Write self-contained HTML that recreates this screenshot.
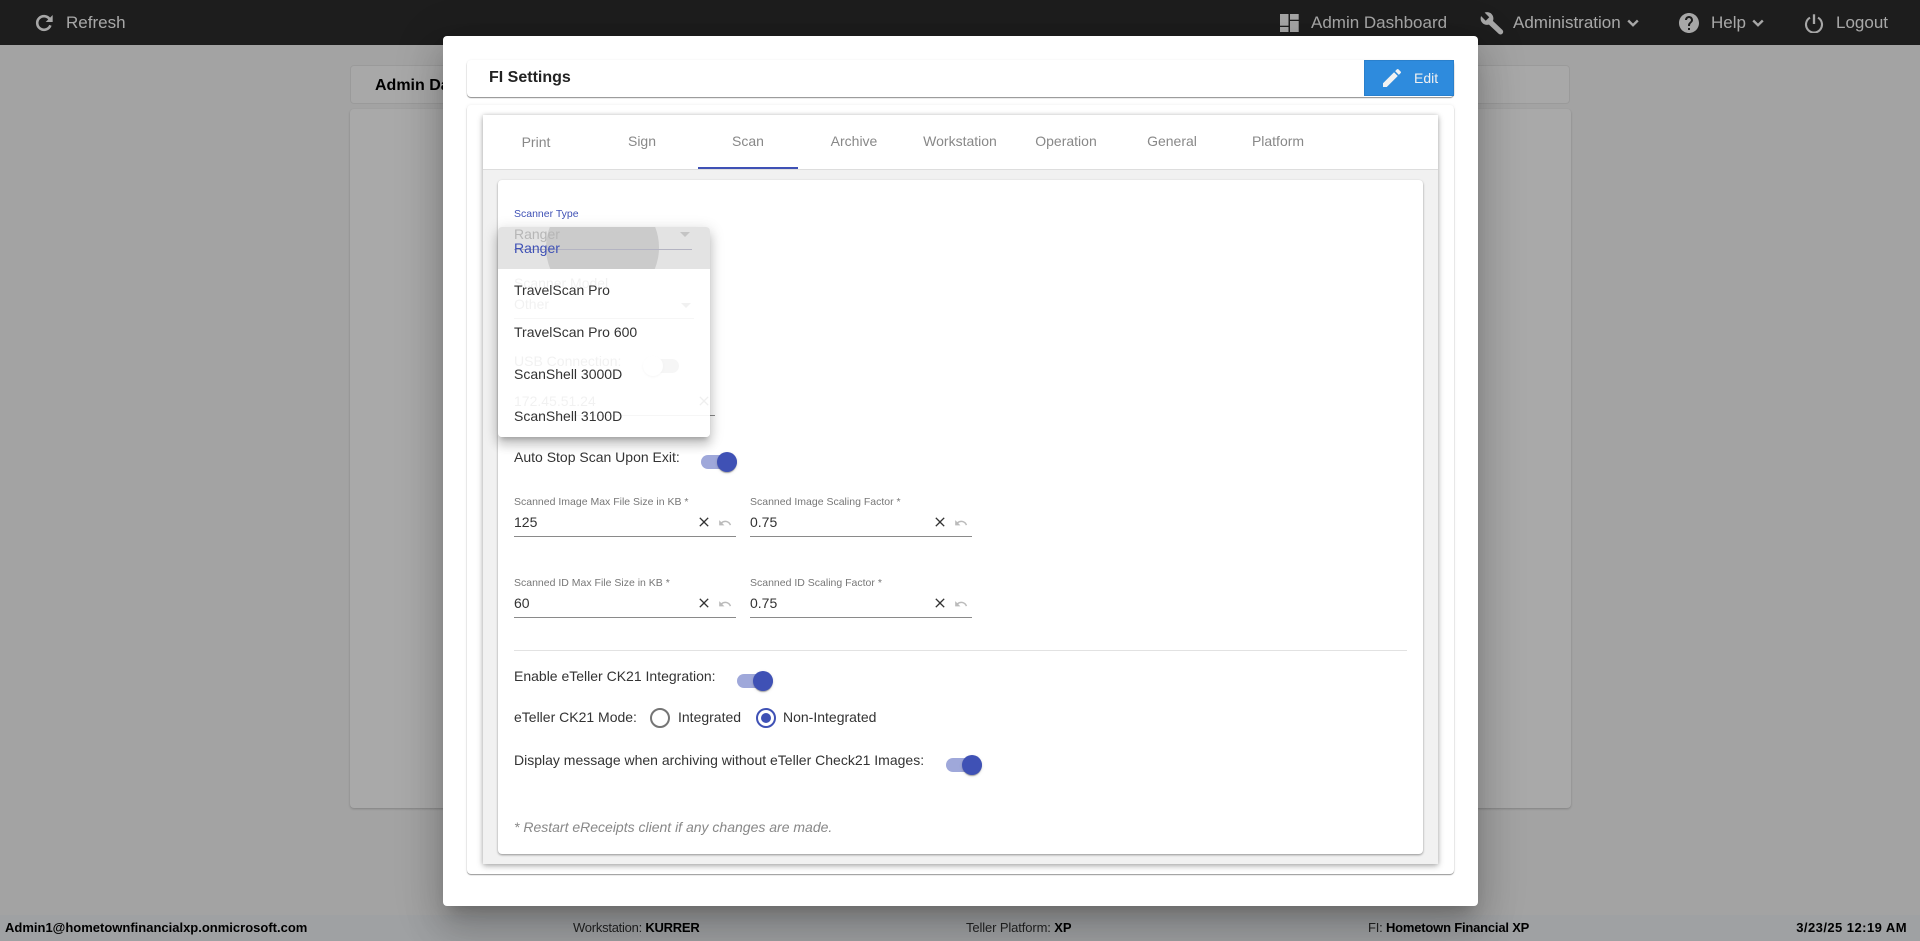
<!DOCTYPE html>
<html><head><meta charset="utf-8"><title>FI Settings</title>
<style>
html,body{margin:0;padding:0;width:1920px;height:941px;overflow:hidden;background:#f0f0f0;font-family:"Liberation Sans",Arial,sans-serif;font-size:14px;color:#333}
div,span,svg{position:absolute;box-sizing:border-box}
.t{white-space:nowrap;line-height:16px;height:16px}
.nav{font-size:17px;line-height:20px;height:20px;white-space:nowrap;color:#f6f6f6}
.ic{fill:#f6f6f6}
.tab{top:133px;width:106px;text-align:center;color:#888;font-size:14px;line-height:16px;height:16px}
.lab{font-size:10.5px;color:#777;line-height:12px;height:12px;white-space:nowrap}
.ul{height:1px;background:#8a8a8a}
.val{font-size:14px;color:#333;line-height:16px;height:16px}
.x{fill:#333}.u{fill:#bbb}
.tr{width:36px;height:14px;border-radius:7px;background:#9fa8da}
.th{width:20px;height:20px;border-radius:50%;background:#3f51b5;box-shadow:0 2px 1px -1px rgba(0,0,0,.2),0 1px 1px 0 rgba(0,0,0,.14),0 1px 3px 0 rgba(0,0,0,.12)}
.foot{top:921px;font-size:13px;line-height:14px;height:14px;white-space:nowrap;color:#333}
.foot b{color:#000}
.opt{left:0;width:212px;height:42px;padding-left:16px;line-height:42px;font-size:14px;color:#333}
</style></head><body>
<!-- page -->
<div style="left:0;top:0;width:1920px;height:45px;background:#2b2b2b"></div>
<svg style="left:33px;top:12px" width="24" height="24" viewBox="0 0 24 24"><path d="M16.6 7.1A6.8 6.8 0 1 0 17.4 13.3" fill="none" stroke="#f6f6f6" stroke-width="2.6"/><path d="M19.7 3V10H12.7z" fill="#f6f6f6"/></svg>
<div class="nav" style="left:66px;top:13px">Refresh</div>
<svg style="left:1280px;top:14px" width="19" height="18" viewBox="0 0 19 18" fill="#f6f6f6"><rect x="0" y="0" width="8.5" height="11.7"/><rect x="0" y="13" width="8.5" height="5"/><rect x="10" y="0" width="8.7" height="5.7"/><rect x="10" y="7" width="8.7" height="11"/></svg>
<div class="nav" style="left:1311px;top:13px">Admin Dashboard</div>
<svg style="left:1480px;top:11px" width="24" height="24" viewBox="0 0 24 24"><path d="M8 9L20.5 20.8" stroke="#f6f6f6" stroke-width="5.4" stroke-linecap="round" fill="none"/><circle cx="7" cy="7.5" r="6.4" fill="#f6f6f6"/><path d="M7.5 8L0 .5" stroke="#2b2b2b" stroke-width="5" fill="none"/></svg>
<div class="nav" style="left:1513px;top:13px">Administration</div>
<svg style="left:1627px;top:19px" width="12" height="8" viewBox="0 0 12 8"><path d="M1.2 1.5L6 6.2 10.8 1.5" fill="none" stroke="#f6f6f6" stroke-width="2.4"/></svg>
<svg class="ic" style="left:1677px;top:11px" width="24" height="24" viewBox="0 0 24 24"><path d="M12 2C6.48 2 2 6.48 2 12s4.48 10 10 10 10-4.48 10-10S17.52 2 12 2zm1 17h-2v-2h2v2zm2.07-7.75l-.9.92C13.45 12.9 13 13.5 13 15h-2v-.5c0-1.1.45-2.1 1.17-2.83l1.24-1.26c.37-.36.59-.86.59-1.41 0-1.1-.9-2-2-2s-2 .9-2 2H8c0-2.21 1.79-4 4-4s4 1.79 4 4c0 .88-.36 1.68-.93 2.25z"/></svg>
<div class="nav" style="left:1711px;top:13px">Help</div>
<svg style="left:1752px;top:19px" width="12" height="8" viewBox="0 0 12 8"><path d="M1.2 1.5L6 6.2 10.8 1.5" fill="none" stroke="#f6f6f6" stroke-width="2.4"/></svg>
<svg style="left:1804px;top:13px" width="20" height="20" viewBox="0 0 20 20"><path d="M6 4.6A8 8 0 1 0 14 4.6" fill="none" stroke="#f6f6f6" stroke-width="2.1"/><path d="M10 1.3V11" stroke="#f6f6f6" stroke-width="2.3" fill="none"/></svg>
<div class="nav" style="left:1836px;top:13px">Logout</div>

<div style="left:350px;top:65px;width:1220px;height:39px;background:#f8f8f8;border:1px solid #e4e4e4;border-radius:4px"></div>
<div style="left:375px;top:77px;font-size:16px;line-height:18px;font-weight:bold;color:#000;white-space:nowrap">Admin Dashboard</div>
<div style="left:350px;top:109px;width:1221px;height:699px;background:#f9f9f9;border-radius:4px;box-shadow:0 1px 2px rgba(0,0,0,.2)"></div>

<div style="left:0;top:915px;width:1920px;height:26px;background:#ebeef1"></div>
<div class="foot" style="left:5px;font-weight:bold;color:#000">Admin1@hometownfinancialxp.onmicrosoft.com</div>
<div class="foot" style="left:573px;letter-spacing:-.25px">Workstation: <b>KURRER</b></div>
<div class="foot" style="left:966px;letter-spacing:-.12px">Teller Platform: <b>XP</b></div>
<div class="foot" style="left:1368px;letter-spacing:-.2px">FI: <b>Hometown Financial XP</b></div>
<div class="foot" style="right:13px;font-weight:bold;color:#000;letter-spacing:.45px">3/23/25 12:19 AM</div>

<!-- overlay -->
<div style="left:0;top:0;width:1920px;height:941px;background:rgba(0,0,0,.32)"></div>

<!-- modal -->
<div style="left:443px;top:36px;width:1035px;height:870px;background:#fff;border-radius:4px;box-shadow:0 11px 15px -7px rgba(0,0,0,.2),0 24px 38px 3px rgba(0,0,0,.14),0 9px 46px 8px rgba(0,0,0,.12)"></div>

<!-- header card -->
<div style="left:467px;top:60px;width:987px;height:37px;background:#fff;border-radius:4px;box-shadow:0 1px 1px rgba(0,0,0,.45),0 0 2px rgba(0,0,0,.06)"></div>
<div style="left:489px;top:69px;font-size:16px;font-weight:bold;line-height:18px;color:#222;white-space:nowrap">FI Settings</div>
<div style="left:1364px;top:60px;width:90px;height:36px;background:#2e8bdd;border:1px solid #2a80cc"></div>
<svg style="left:1380px;top:66px" width="24" height="24" viewBox="0 0 24 24" fill="#f2f2f2"><path d="M3 17.25V21h3.75L17.81 9.94l-3.75-3.75L3 17.25zM20.71 7.04c.39-.39.39-1.02 0-1.41l-2.34-2.34c-.39-.39-1.02-.39-1.41 0l-1.83 1.83 3.75 3.75 1.83-1.83z"/></svg>
<div style="left:1414px;top:70px;font-size:14px;line-height:16px;color:#f0f0f0">Edit</div>

<!-- outer card -->
<div style="left:467px;top:105px;width:987px;height:769px;background:#fff;border-radius:4px;box-shadow:0 1px 1px rgba(0,0,0,.4),0 0 3px rgba(0,0,0,.08)"></div>
<!-- tab card -->
<div style="left:483px;top:115px;width:955px;height:749px;background:#f1f1f1;box-shadow:0 2px 6px rgba(0,0,0,.3),0 0 4px rgba(0,0,0,.12)"></div>
<div style="left:483px;top:115px;width:955px;height:55px;background:#fff;border-bottom:1px solid #ddd"></div>
<div class="tab" style="left:483px;top:134px">Print</div>
<div class="tab" style="left:589px">Sign</div>
<div class="tab" style="left:695px">Scan</div>
<div class="tab" style="left:801px">Archive</div>
<div class="tab" style="left:907px">Workstation</div>
<div class="tab" style="left:1013px">Operation</div>
<div class="tab" style="left:1119px">General</div>
<div class="tab" style="left:1225px">Platform</div>
<div style="left:698px;top:167px;width:100px;height:2px;background:#3f51b5"></div>

<!-- form card -->
<div style="left:498px;top:180px;width:925px;height:674px;background:#fff;border-radius:4px;box-shadow:0 1px 2px rgba(0,0,0,.4)"></div>
<div class="lab" style="left:514px;top:208px;color:#3f51b5">Scanner Type</div>
<!-- under dropdown -->
<div class="val" style="left:514px;top:275px;color:#555">Scanner Model</div>
<div class="val" style="left:514px;top:296px;color:#555">Other</div>
<div style="left:681px;top:303px;width:0;height:0;border:5px solid transparent;border-top-color:#555"></div>
<div style="left:514px;top:318px;width:180px;height:1px;background:#8a8a8a"></div>
<div class="val" style="left:514px;top:353px;color:#555">USB Connection:</div>
<div style="left:644px;top:359px;width:35px;height:14px;border-radius:7px;background:#888"></div>
<div style="left:643px;top:356px;width:20px;height:20px;border-radius:50%;background:#fff;box-shadow:0 1px 2px rgba(0,0,0,.5)"></div>
<div class="val" style="left:514px;top:393px;color:#555">172.45.51.24</div>
<svg class="x" style="left:696px;top:393px" width="16" height="16" viewBox="0 0 24 24"><path d="M19 6.41L17.59 5 12 10.59 6.41 5 5 6.41 10.59 12 5 17.59 6.41 19 12 13.41 17.59 19 19 17.59 13.41 12z"/></svg>
<div style="left:514px;top:415px;width:201px;height:1px;background:#8a8a8a"></div>

<!-- dropdown -->
<div style="left:498px;top:227px;width:212px;height:210px;border-radius:4px;overflow:hidden;background:rgba(255,255,255,.92);box-shadow:0 5px 5px -3px rgba(0,0,0,.2),0 8px 10px 1px rgba(0,0,0,.14),0 3px 14px 2px rgba(0,0,0,.12)">
  <div style="left:0;top:0;width:212px;height:42px;overflow:hidden;background:rgba(218,218,218,.75)">
    <div style="left:48px;top:-36px;width:113px;height:113px;border-radius:50%;background:rgba(170,170,170,.42)"></div>
    <div style="left:16px;top:-1px;font-size:14px;line-height:16px;color:#b6b6b6">Ranger</div>
    <div style="left:16px;top:22px;width:178px;height:1px;background:#b4b4c2"></div>
    <div style="left:182px;top:5px;width:0;height:0;border:5px solid transparent;border-top-color:#c4c4c4"></div>
  </div>
  <div class="opt" style="top:0;color:#3f51b5">Ranger</div>
  <div class="opt" style="top:42px">TravelScan Pro</div>
  <div class="opt" style="top:84px">TravelScan Pro 600</div>
  <div class="opt" style="top:126px">ScanShell 3000D</div>
  <div class="opt" style="top:168px">ScanShell 3100D</div>
</div>

<div class="val" style="left:514px;top:449px">Auto Stop Scan Upon Exit:</div>
<div class="tr" style="left:701px;top:455px"></div><div class="th" style="left:717px;top:452px"></div>

<!-- fields -->
<div class="lab" style="left:514px;top:496px">Scanned Image Max File Size in KB *</div>
<div class="val" style="left:514px;top:514px">125</div>
<div class="ul" style="left:514px;top:536px;width:222px"></div>
<svg class="x" style="left:696px;top:514px" width="16" height="16" viewBox="0 0 24 24"><path d="M19 6.41L17.59 5 12 10.59 6.41 5 5 6.41 10.59 12 5 17.59 6.41 19 12 13.41 17.59 19 19 17.59 13.41 12z"/></svg>
<svg class="u" style="left:718px;top:516px" width="14" height="14" viewBox="0 0 24 24"><path d="M12.5 8c-2.65 0-5.05.99-6.9 2.6L2 7v9h9l-3.62-3.62c1.39-1.16 3.16-1.88 5.12-1.88 3.54 0 6.55 2.31 7.6 5.5l2.37-.78C21.08 11.03 17.15 8 12.5 8z"/></svg>

<div class="lab" style="left:750px;top:496px">Scanned Image Scaling Factor *</div>
<div class="val" style="left:750px;top:514px">0.75</div>
<div class="ul" style="left:750px;top:536px;width:222px"></div>
<svg class="x" style="left:932px;top:514px" width="16" height="16" viewBox="0 0 24 24"><path d="M19 6.41L17.59 5 12 10.59 6.41 5 5 6.41 10.59 12 5 17.59 6.41 19 12 13.41 17.59 19 19 17.59 13.41 12z"/></svg>
<svg class="u" style="left:954px;top:516px" width="14" height="14" viewBox="0 0 24 24"><path d="M12.5 8c-2.65 0-5.05.99-6.9 2.6L2 7v9h9l-3.62-3.62c1.39-1.16 3.16-1.88 5.12-1.88 3.54 0 6.55 2.31 7.6 5.5l2.37-.78C21.08 11.03 17.15 8 12.5 8z"/></svg>

<div class="lab" style="left:514px;top:577px">Scanned ID Max File Size in KB *</div>
<div class="val" style="left:514px;top:595px">60</div>
<div class="ul" style="left:514px;top:617px;width:222px"></div>
<svg class="x" style="left:696px;top:595px" width="16" height="16" viewBox="0 0 24 24"><path d="M19 6.41L17.59 5 12 10.59 6.41 5 5 6.41 10.59 12 5 17.59 6.41 19 12 13.41 17.59 19 19 17.59 13.41 12z"/></svg>
<svg class="u" style="left:718px;top:597px" width="14" height="14" viewBox="0 0 24 24"><path d="M12.5 8c-2.65 0-5.05.99-6.9 2.6L2 7v9h9l-3.62-3.62c1.39-1.16 3.16-1.88 5.12-1.88 3.54 0 6.55 2.31 7.6 5.5l2.37-.78C21.08 11.03 17.15 8 12.5 8z"/></svg>

<div class="lab" style="left:750px;top:577px">Scanned ID Scaling Factor *</div>
<div class="val" style="left:750px;top:595px">0.75</div>
<div class="ul" style="left:750px;top:617px;width:222px"></div>
<svg class="x" style="left:932px;top:595px" width="16" height="16" viewBox="0 0 24 24"><path d="M19 6.41L17.59 5 12 10.59 6.41 5 5 6.41 10.59 12 5 17.59 6.41 19 12 13.41 17.59 19 19 17.59 13.41 12z"/></svg>
<svg class="u" style="left:954px;top:597px" width="14" height="14" viewBox="0 0 24 24"><path d="M12.5 8c-2.65 0-5.05.99-6.9 2.6L2 7v9h9l-3.62-3.62c1.39-1.16 3.16-1.88 5.12-1.88 3.54 0 6.55 2.31 7.6 5.5l2.37-.78C21.08 11.03 17.15 8 12.5 8z"/></svg>

<div style="left:514px;top:650px;width:893px;height:1px;background:#e2e2e2"></div>

<div class="val" style="left:514px;top:668px">Enable eTeller CK21 Integration:</div>
<div class="tr" style="left:737px;top:674px"></div><div class="th" style="left:753px;top:671px"></div>

<div class="val" style="left:514px;top:709px">eTeller CK21 Mode:</div>
<div style="left:650px;top:708px;width:20px;height:20px;border-radius:50%;border:2px solid #757575"></div>
<div class="val" style="left:678px;top:709px">Integrated</div>
<div style="left:756px;top:708px;width:20px;height:20px;border-radius:50%;border:2px solid #3f51b5"></div>
<div style="left:761px;top:713px;width:10px;height:10px;border-radius:50%;background:#3f51b5"></div>
<div class="val" style="left:783px;top:709px">Non-Integrated</div>

<div class="val" style="left:514px;top:752px;white-space:nowrap">Display message when archiving without eTeller Check21 Images:</div>
<div class="tr" style="left:946px;top:758px"></div><div class="th" style="left:962px;top:755px"></div>

<div class="val" style="left:514px;top:819px;font-style:italic;color:#888;white-space:nowrap">* Restart eReceipts client if any changes are made.</div>
</body></html>
